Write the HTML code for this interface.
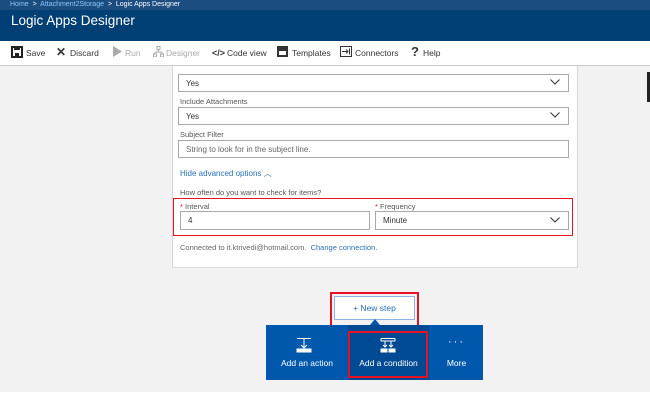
<!DOCTYPE html>
<html><head><style>
*{margin:0;padding:0;box-sizing:border-box}
body{width:650px;height:401px;overflow:hidden;background:#fff;font-family:"Liberation Sans",sans-serif;position:relative}
.a{position:absolute}
.top{left:0;top:0;width:650px;height:41px;background:#003f74}
.crumb{left:0;top:0;width:650px;height:10px;background:#1c4d80;font-size:7px;color:#fff;padding-left:10px;line-height:10px}
.crumb span{color:#8cc4ff}
.title{left:11px;top:13px;color:#fff;font-size:13.5px}
.tb{left:0;top:41px;width:650px;height:25px;background:#fff;border-bottom:1px solid #ccc;font-size:8.5px;color:#333}
.tb div{position:absolute;top:7px}
.bg{left:0;top:66px;width:650px;height:326px;background:#f2f2f2}
.card{left:172px;top:66px;width:406px;height:202px;background:#fff;border:1px solid #d6d6d6;border-top:none}
.fld{border:1px solid #a9a9a9;background:#fff;font-size:8px;color:#333;padding-left:7px;line-height:17px;height:18px}
.lbl{font-size:7.5px;color:#555}
.chev{position:absolute;right:8px;top:4px;width:10px;height:6px}
.panel{left:266px;top:325px;width:217px;height:55px;background:#0058ad}
.btn{color:#fff;font-size:8.5px;text-align:center}
</style></head><body>
<div class="a top"></div>
<div class="a crumb"><span>Home</span> &nbsp;&gt;&nbsp; <span>Attachment2Storage</span> &nbsp;&gt;&nbsp; Logic Apps Designer</div>
<div class="a title">Logic Apps Designer</div>
<div class="a tb">
<div style="left:11px;top:5px"><svg width="12" height="12"><rect x="1" y="1" width="10" height="10" fill="none" stroke="#222" stroke-width="2"/><rect x="3" y="1" width="6" height="3" fill="#222"/><rect x="4" y="7" width="4" height="4" fill="#222"/></svg></div>
<div style="left:26px">Save</div>
<div style="left:56px;top:4px;font-size:12px;font-weight:bold">✕</div>
<div style="left:70px">Discard</div>
<div style="left:112px;top:5px"><svg width="10" height="11"><path d="M1 0L10 5.5L1 11Z" fill="#aaa"/></svg></div>
<div style="left:125px;color:#aaa">Run</div>
<div style="left:153px;top:5px"><svg width="11" height="11" stroke="#aaa" fill="none"><rect x="4" y="0.5" width="3" height="3"/><path d="M5.5 3.5V6M2 6H9M2 6V8M9 6V8"/><rect x="0.5" y="8" width="3" height="3"/><rect x="7.5" y="8" width="3" height="3"/></svg></div>
<div style="left:166px;color:#aaa">Designer</div>
<div style="left:212px;font-weight:bold;font-size:9px">&lt;/&gt;</div>
<div style="left:227px">Code view</div>
<div style="left:277px;top:5px"><svg width="11" height="11"><rect x="0" y="0" width="11" height="11" fill="#333"/><rect x="2" y="4" width="7" height="5" fill="#fff"/><rect x="2" y="4" width="7" height="1" fill="#333"/></svg></div>
<div style="left:292px">Templates</div>
<div style="left:340px;top:5px"><svg width="12" height="11" fill="none" stroke="#333"><rect x="0.5" y="0.5" width="11" height="10"/><path d="M2 5.5H8M6 3.5L8 5.5L6 7.5M9.5 2.5V8.5"/></svg></div>
<div style="left:355px">Connectors</div>
<div style="left:411px;top:3px;font-size:13px;font-weight:bold">?</div>
<div style="left:423px">Help</div>
</div>
<div class="a bg"></div>
<div class="a" style="left:647px;top:72px;width:3px;height:30px;background:#222"></div>
<div class="a card"></div>
<div class="a fld" style="left:178px;top:74px;width:391px">Yes<svg class="chev"><path d="M0.5 0.5L5 5L9.5 0.5" fill="none" stroke="#333"/></svg></div>
<div class="a lbl" style="left:180px;top:97px">Include Attachments</div>
<div class="a fld" style="left:178px;top:107px;width:391px">Yes<svg class="chev"><path d="M0.5 0.5L5 5L9.5 0.5" fill="none" stroke="#333"/></svg></div>
<div class="a lbl" style="left:180px;top:130px">Subject Filter</div>
<div class="a fld" style="left:178px;top:140px;width:391px;color:#666">String to look for in the subject line.</div>
<div class="a" style="left:180px;top:168px;font-size:8px;color:#2a72b8">Hide advanced options <span style="font-size:8px">︿</span></div>
<div class="a lbl" style="left:180px;top:188px">How often do you want to check for items?</div>
<div class="a" style="left:173px;top:198px;width:400px;height:38px;border:1.5px solid #e81123"></div>
<div class="a lbl" style="left:180px;top:202px"><span style="color:#e81123">*</span> Interval</div>
<div class="a fld" style="left:180px;top:211px;width:190px;height:19px;line-height:18px">4</div>
<div class="a lbl" style="left:375px;top:202px"><span style="color:#e81123">*</span> Frequency</div>
<div class="a fld" style="left:375px;top:211px;width:194px;height:19px;line-height:18px">Minute<svg class="chev" style="top:5px"><path d="M0.5 0.5L5 5L9.5 0.5" fill="none" stroke="#333"/></svg></div>
<div class="a" style="left:180px;top:243px;font-size:7.5px;color:#666">Connected to it.ktrivedi@hotmail.com. &nbsp;<span style="color:#2a72b8">Change connection.</span></div>
<div class="a" style="left:330px;top:292px;width:89px;height:35px;border:2px solid #e81123"></div>
<div class="a" style="left:334px;top:296px;width:81px;height:24px;background:#fff;border:1px solid #8ab4e8;font-size:8.5px;color:#2a72b8;text-align:center;line-height:22px">+ New step</div>
<div class="a" style="left:370px;top:319px;width:0;height:0;border-left:5px solid transparent;border-right:5px solid transparent;border-bottom:6px solid #0058ad"></div>
<div class="a panel"></div>
<div class="a" style="left:348px;top:325px;width:81px;height:55px;background:#004a94"></div>
<div class="a" style="left:348px;top:331px;width:80px;height:47px;border:2px solid #e81123"></div>
<svg class="a" style="left:296px;top:337px" width="16" height="16" fill="none" stroke="#fff"><path d="M1 1.5H15M8 1.5V10M5 8L8 11L11 8"/><rect x="1" y="12" width="14" height="3" fill="#fff"/></svg>
<div class="a btn" style="left:266px;top:358px;width:82px">Add an action</div>
<svg class="a" style="left:380px;top:337px" width="16" height="16" fill="none" stroke="#fff"><path d="M1 1.5H15M1 1.5V4M15 1.5V4M1 4H15M5 4V10M11 4V10M3 8L5 10L7 8M9 8L11 10L13 8"/><rect x="1" y="12" width="6" height="3" fill="#fff"/><rect x="9" y="12" width="6" height="3" fill="#fff"/></svg>
<div class="a btn" style="left:348px;top:358px;width:81px">Add a condition</div>
<div class="a btn" style="left:430px;top:336px;width:53px;font-size:11px;letter-spacing:2px">···</div>
<div class="a btn" style="left:430px;top:358px;width:53px">More</div>
</body></html>
